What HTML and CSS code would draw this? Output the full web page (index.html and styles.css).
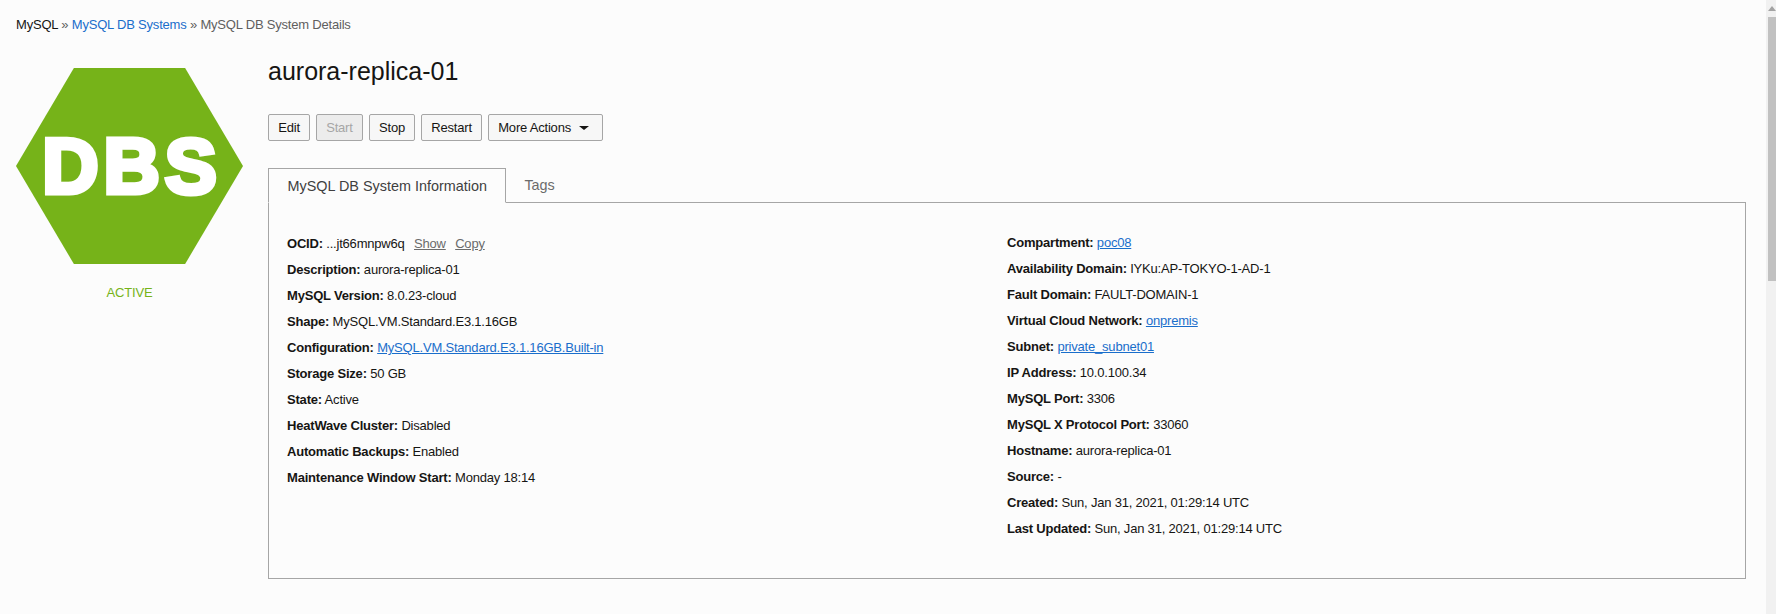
FILE: index.html
```html
<!DOCTYPE html>
<html lang="en">
<head>
  <meta charset="UTF-8">
  <meta name="viewport" content="width=device-width, initial-scale=1.0">
  <title>MySQL DB System Details</title>
  <link rel="stylesheet" href="styles.css">
</head>
<body>
  <div class="page">
    <!-- Breadcrumbs -->
    <div class="breadcrumbs">
      <span class="crumb-root">MySQL</span>
      <span class="crumb-sep">»</span>
      <a class="crumb-link" href="#">MySQL DB Systems</a>
      <span class="crumb-sep">»</span>
      <span class="crumb-current">MySQL DB System Details</span>
    </div>

    <div class="details">
      <!-- Status Hexagon -->
      <div class="status-col">
        <div class="hexagon"><span class="hexagon-text">DBS</span></div>
        <div class="status-text">ACTIVE</div>
      </div>

      <!-- Content Area -->
      <div class="content">
        <h1 class="title">aurora-replica-01</h1>

        <div class="actions">
          <button class="button">Edit</button>
          <button class="button" disabled>Start</button>
          <button class="button">Stop</button>
          <button class="button">Restart</button>
          <button class="button">More Actions <span class="caret"></span></button>
        </div>

        <div class="tabs">
          <div class="tab tab-active">MySQL DB System Information</div>
          <div class="tab">Tags</div>
        </div>

        <div class="panel">
          <div class="info-col info-col-left">
            <div class="info-row"><b>OCID:</b> ...jt66mnpw6q <a class="muted-link" href="#">Show</a> <a class="muted-link" href="#">Copy</a></div>
            <div class="info-row"><b>Description:</b> aurora-replica-01</div>
            <div class="info-row"><b>MySQL Version:</b> 8.0.23-cloud</div>
            <div class="info-row"><b>Shape:</b> MySQL.VM.Standard.E3.1.16GB</div>
            <div class="info-row"><b>Configuration:</b> <a href="#">MySQL.VM.Standard.E3.1.16GB.Built-in</a></div>
            <div class="info-row"><b>Storage Size:</b> 50 GB</div>
            <div class="info-row"><b>State:</b> Active</div>
            <div class="info-row"><b>HeatWave Cluster:</b> Disabled</div>
            <div class="info-row"><b>Automatic Backups:</b> Enabled</div>
            <div class="info-row"><b>Maintenance Window Start:</b> Monday 18:14</div>
          </div>
          <div class="info-col">
            <div class="info-row"><b>Compartment:</b> <a href="#">poc08</a></div>
            <div class="info-row"><b>Availability Domain:</b> IYKu:AP-TOKYO-1-AD-1</div>
            <div class="info-row"><b>Fault Domain:</b> FAULT-DOMAIN-1</div>
            <div class="info-row"><b>Virtual Cloud Network:</b> <a href="#">onpremis</a></div>
            <div class="info-row"><b>Subnet:</b> <a href="#">private_subnet01</a></div>
            <div class="info-row"><b>IP Address:</b> 10.0.100.34</div>
            <div class="info-row"><b>MySQL Port:</b> 3306</div>
            <div class="info-row"><b>MySQL X Protocol Port:</b> 33060</div>
            <div class="info-row"><b>Hostname:</b> aurora-replica-01</div>
            <div class="info-row"><b>Source:</b> -</div>
            <div class="info-row"><b>Created:</b> Sun, Jan 31, 2021, 01:29:14 UTC</div>
            <div class="info-row"><b>Last Updated:</b> Sun, Jan 31, 2021, 01:29:14 UTC</div>
          </div>
        </div>
      </div>
    </div>
  </div>

  <!-- Scrollbar -->
  <div class="scrollbar">
    <div class="scroll-arrow"></div>
    <div class="scroll-thumb"></div>
  </div>
</body>
</html>
```

FILE: styles.css
```css
/* General Styles */
html, body {
  height: 100%;
}

body {
  margin: 0;
  display: flex;
  overflow: hidden;
  background-color: #fcfcfc;
  color: #161513;
  font-family: "Liberation Sans", Arial, sans-serif;
  font-size: 13px;
  letter-spacing: -0.2px;
}

a {
  color: #1a6ecb;
}

.page {
  flex: 1;
  padding: 17px 20px 0 16px;
}

/* Breadcrumbs */
.breadcrumbs {
  line-height: 16px;
  margin-bottom: 27px;
}

.crumb-sep,
.crumb-current {
  color: #5f5f5f;
}

.crumb-link {
  text-decoration: none;
}

.details {
  display: flex;
}

/* Status Hexagon */
.status-col {
  width: 227px;
  margin-right: 25px;
  flex-shrink: 0;
  padding-top: 8px;
}

.hexagon {
  height: 196px;
  display: flex;
  align-items: center;
  justify-content: center;
  background-color: #76b319;
  clip-path: polygon(0 50%, 25.5% 0, 74.5% 0, 100% 50%, 74.5% 100%, 25.5% 100%);
}

.hexagon-text {
  margin-right: -5px;
  color: #fff;
  font-size: 78px;
  font-weight: bold;
  line-height: 1;
  letter-spacing: 5px;
  -webkit-text-stroke: 5px #fff;
}

.status-text {
  margin-top: 21px;
  text-align: center;
  color: #76b319;
  line-height: 16px;
}

/* Content Area */
.content {
  flex: 1;
}

.title {
  margin: 0 0 32px;
  font-size: 25px;
  font-weight: normal;
  line-height: 22px;
  letter-spacing: 0;
}

.actions {
  display: flex;
  gap: 6px;
  margin-bottom: 27px;
}

.button {
  height: 27px;
  padding: 0 9.2px 1px;
  border: 1px solid #a6a6a6;
  border-radius: 2px;
  background-color: #f7f7f7;
  color: #161513;
  font-family: inherit;
  font-size: 13px;
  letter-spacing: -0.2px;
}

.button:disabled {
  background-color: #ececec;
  color: #a6a6a6;
}

.caret {
  display: inline-block;
  margin: 0 3px 0 5px;
  vertical-align: middle;
  border-top: 4px solid #161513;
  border-left: 5px solid transparent;
  border-right: 5px solid transparent;
}

/* Tabs */
.tabs {
  display: flex;
  position: relative;
  z-index: 1;
  margin-bottom: -1px;
  font-size: 14.4px;
  letter-spacing: 0;
}

.tab {
  padding: 9px 18px 7px;
  line-height: 16px;
  color: #6b6b6b;
  border-bottom: 1px solid #a6a6a6;
}

.tab-active {
  padding: 0 18.5px;
  height: 33px;
  line-height: 34px;
  border: 1px solid #a6a6a6;
  border-bottom: 1px solid #fcfcfc;
  color: #3f3f3f;
}

.tabs .tab:last-child {
  flex: 1;
}

/* Info Panel */
.panel {
  display: flex;
  height: 343px;
  padding: 32px 18px 0;
  border: 1px solid #a6a6a6;
}

.info-col {
  width: 720px;
}

.info-col-left {
  padding-top: 1px;
}

.info-row {
  height: 26px;
  line-height: 16px;
}

.info-row b {
  color: #161513;
}

.muted-link {
  margin-left: 6px;
  color: #6b6b6b;
}

/* Scrollbar */
.scrollbar {
  width: 13px;
  flex-shrink: 0;
  background-color: #f1f1f1;
}

.scroll-arrow {
  width: 0;
  margin: 6px 0 0 2px;
  border-bottom: 5px solid #a3a3a3;
  border-left: 4px solid transparent;
  border-right: 4px solid transparent;
}

.scroll-thumb {
  height: 264px;
  margin: 6px 0 0 2px;
  background-color: #c1c1c1;
}
```
